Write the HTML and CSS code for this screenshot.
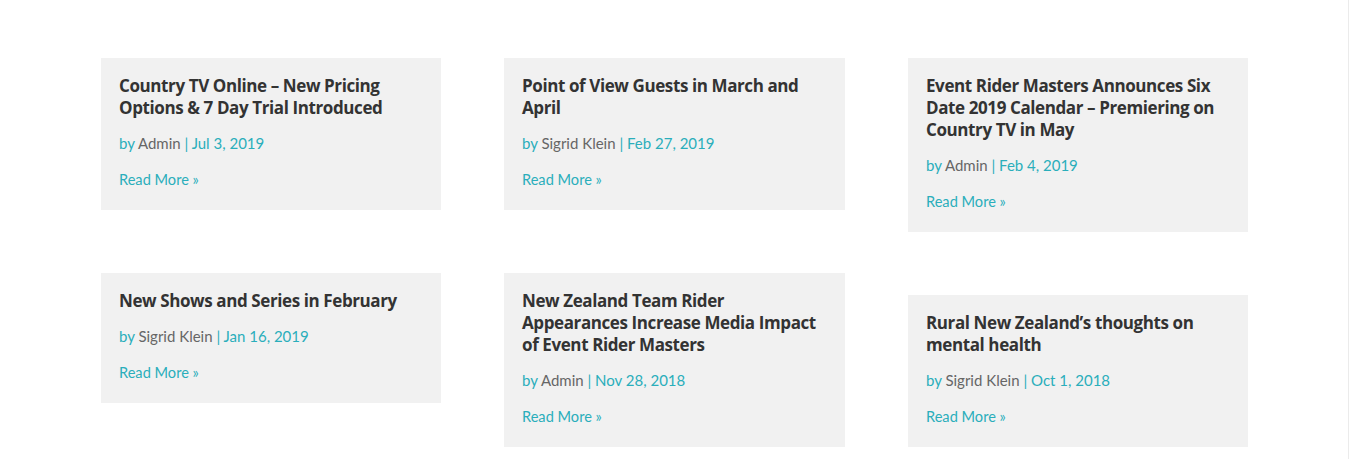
FILE: index.html
```html
<!DOCTYPE html>
<html lang="en">
<head>
<meta charset="utf-8">
<title>Blog</title>
<link rel="stylesheet" href="styles.css">
</head>
<body>
<div class="page">
  <div class="grid">
    <div class="column">
      <article class="post">
        <h2 class="title">Country TV Online – New Pricing Options &amp; 7 Day Trial Introduced</h2>
        <p class="meta">by <span class="author">Admin</span> | Jul 3, 2019</p>
        <a class="more" href="#">Read More »</a>
      </article>
      <article class="post">
        <h2 class="title">New Shows and Series in February</h2>
        <p class="meta">by <span class="author">Sigrid Klein</span> | Jan 16, 2019</p>
        <a class="more" href="#">Read More »</a>
      </article>
    </div>
    <div class="column">
      <article class="post">
        <h2 class="title">Point of View Guests in March and April</h2>
        <p class="meta">by <span class="author">Sigrid Klein</span> | Feb 27, 2019</p>
        <a class="more" href="#">Read More »</a>
      </article>
      <article class="post">
        <h2 class="title">New Zealand Team Rider Appearances Increase Media Impact of Event Rider Masters</h2>
        <p class="meta">by <span class="author">Admin</span> | Nov 28, 2018</p>
        <a class="more" href="#">Read More »</a>
      </article>
    </div>
    <div class="column">
      <article class="post">
        <h2 class="title">Event Rider Masters Announces Six Date 2019 Calendar – Premiering on Country TV in May</h2>
        <p class="meta">by <span class="author">Admin</span> | Feb 4, 2019</p>
        <a class="more" href="#">Read More »</a>
      </article>
      <article class="post">
        <h2 class="title">Rural New Zealand’s thoughts on mental health</h2>
        <p class="meta">by <span class="author">Sigrid Klein</span> | Oct 1, 2018</p>
        <a class="more" href="#">Read More »</a>
      </article>
    </div>
  </div>
</div>
</body>
</html>
```

FILE: styles.css
```css
html, body {
  margin: 0;
  padding: 0;
  background: #ffffff;
}
.page {
  width: 1349px;
  min-height: 459px;
  box-sizing: border-box;
  border-right: 1px solid #ebebeb;
  padding-top: 58px;
}
.grid {
  width: 1147px;
  margin-left: 101px;
  display: grid;
  grid-template-columns: 340px 341px 340px;
  column-gap: 63px;
  align-items: start;
}
.column {
  display: flex;
  flex-direction: column;
  gap: 63px;
}
.post {
  background: #f1f1f1;
  padding: 17px 18px 19px 18px;
}
.title {
  margin: 0 0 13px 0;
  font-family: "Open Sans", "Liberation Sans", sans-serif;
  font-weight: 700;
  font-size: 17px;
  letter-spacing: -0.4px;
  line-height: 22px;
  color: #333333;
}
.meta {
  margin: 0 0 15px 0;
  font-family: Lato, "Liberation Sans", sans-serif;
  font-size: 15px;
  line-height: 22px;
  color: #2aaebb;
}
.author {
  color: #666666;
}
.more {
  display: block;
  font-family: Lato, "Liberation Sans", sans-serif;
  font-size: 14.6px;
  line-height: 22px;
  color: #2aaebb;
  text-decoration: none;
}
```
